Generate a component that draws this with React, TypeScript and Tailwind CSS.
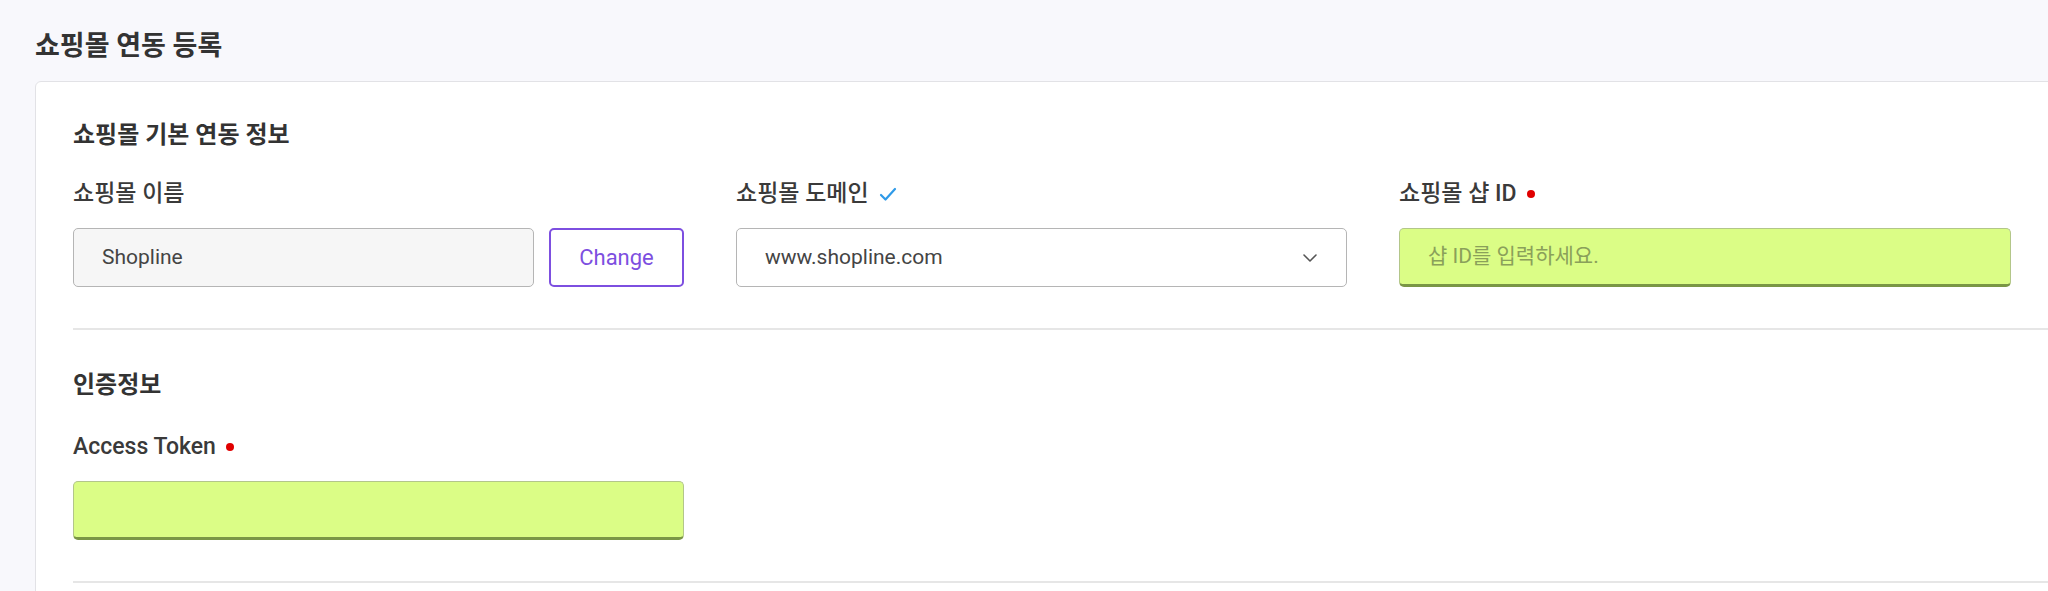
import React from 'react';

const font = 'font-["Roboto","Noto_Sans_CJK_KR",sans-serif]';

const RequiredDot = () => <span className="ml-[10px] inline-block w-[8px] h-[8px] rounded-full bg-[#e00000]" />;

const Label: React.FC<{ children: React.ReactNode }> = ({ children }) => (
  <div className="flex items-center h-[26px] text-[23px] font-medium text-[#3a3a3a]">{children}</div>
);

const LimeInput: React.FC<{ placeholder?: string }> = ({ placeholder }) => (
  <div className="h-[59px] rounded-[5px] bg-[#dbfd86] border border-[#b3c68a] border-b-[3px] border-b-[#7a9645] flex items-center px-[28px] text-[21px] text-[#8aa05a]">
    {placeholder}
  </div>
);

export default function App() {
  return (
    <div className={`${font} min-h-[591px] bg-[#f8f8fc] overflow-hidden pl-[35px] pt-[31px]`}>
      <h1 className="text-[27px] font-semibold text-[#333] leading-[30px]">쇼핑몰 연동 등록</h1>
      <div className="mt-[20px] w-[2040px] bg-white border border-[#e2e2e6] rounded-[6px] pl-[37px] pt-[40px]">
        {/* 기본 연동 정보 */}
        <h2 className="text-[24px] font-semibold text-[#333] leading-[26px]">쇼핑몰 기본 연동 정보</h2>
        <div className="mt-[33px] grid grid-cols-[611px_611px_612px] gap-x-[52px]">
          <div>
            <Label>쇼핑몰 이름</Label>
            <div className="mt-[21px] flex gap-[15px]">
              <div className="flex-1 h-[59px] rounded-[5px] bg-[#f6f6f6] border border-[#b5b5b5] flex items-center px-[28px] text-[21px] text-[#444]">
                Shopline
              </div>
              <button className="w-[135px] h-[59px] rounded-[5px] border-2 border-[#7d4fe0] text-[#7d4fe0] text-[22px] bg-white">
                Change
              </button>
            </div>
          </div>
          <div>
            <Label>
              쇼핑몰 도메인
              <svg className="ml-[10px]" width="18" height="15" viewBox="0 0 18 15" fill="none">
                <path d="M2 8 L6.5 12.5 L16 2" stroke="#2f9ae8" strokeWidth="2.2" strokeLinecap="round" strokeLinejoin="round" />
              </svg>
            </Label>
            <div className="mt-[21px] h-[59px] rounded-[5px] bg-white border border-[#b5b5b5] flex items-center justify-between px-[28px] text-[21px] text-[#444]">
              <span>www.shopline.com</span>
              <svg width="16" height="10" viewBox="0 0 16 10" fill="none">
                <path d="M2 2 L8 8 L14 2" stroke="#555" strokeWidth="1.6" strokeLinecap="round" strokeLinejoin="round" />
              </svg>
            </div>
          </div>
          <div>
            <Label>
              쇼핑몰 샵 ID
              <RequiredDot />
            </Label>
            <div className="mt-[21px]">
              <LimeInput placeholder="샵 ID를 입력하세요." />
            </div>
          </div>
        </div>
        <div className="mt-[41px] h-[2px] bg-[#e6e6e6]" />

        {/* 인증정보 */}
        <h2 className="mt-[42px] text-[24px] font-semibold text-[#333] leading-[26px]">인증정보</h2>
        <div className="mt-[36px] w-[611px]">
          <Label>
            Access Token
            <RequiredDot />
          </Label>
          <div className="mt-[21px]">
            <LimeInput />
          </div>
        </div>
        <div className="mt-[41px] h-[2px] bg-[#e6e6e6]" />
        <div className="h-[40px]" />
      </div>
    </div>
  );
}
